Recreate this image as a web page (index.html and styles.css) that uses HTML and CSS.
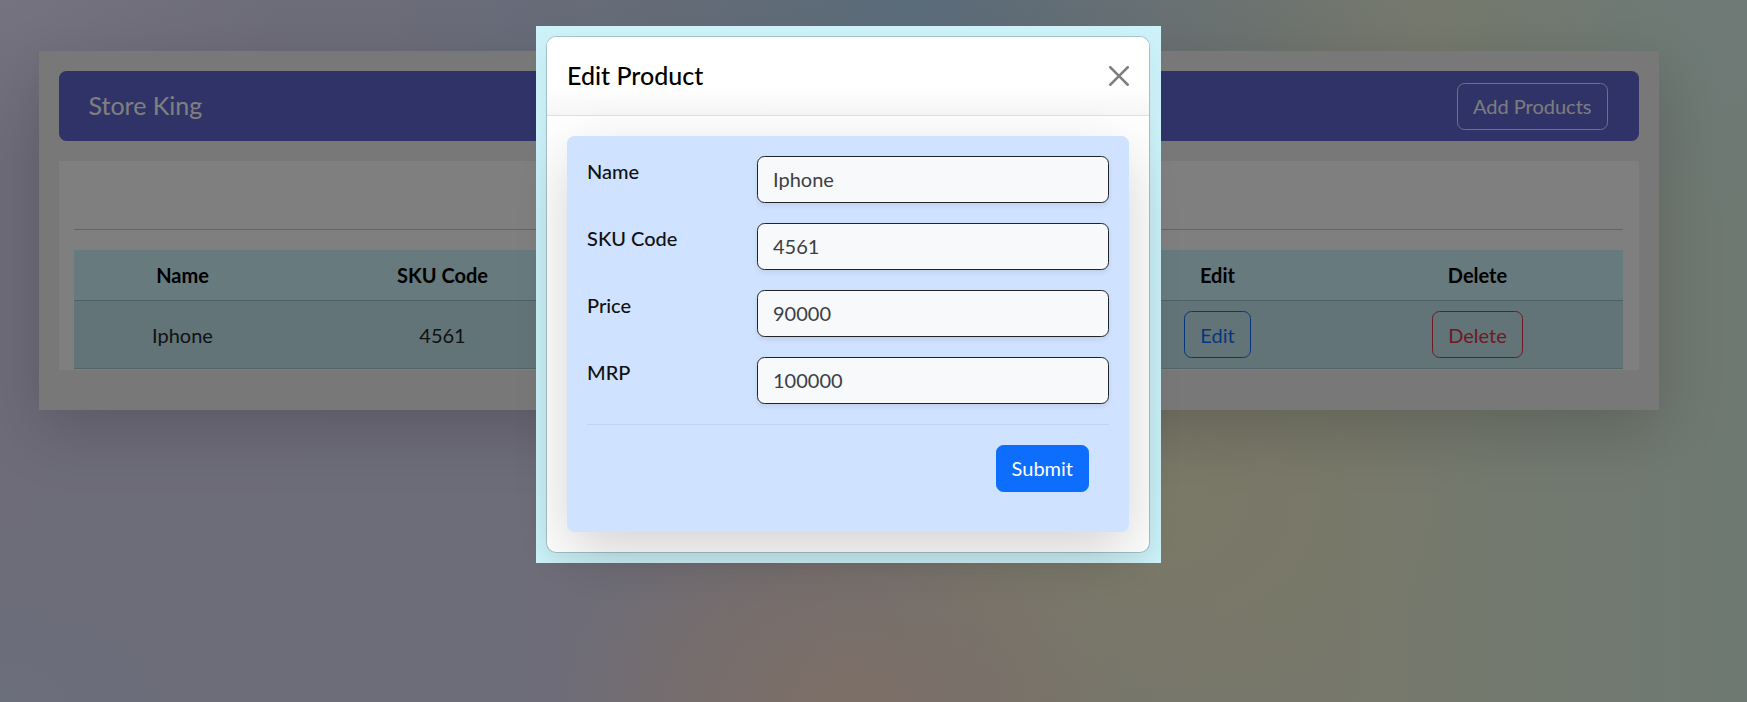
FILE: index.html
```html
<!DOCTYPE html>
<html lang="en">
<head>
<meta charset="utf-8">
<title>Store King</title>
<link rel="stylesheet" href="styles.css">
</head>
<body>
<div class="app-shell">
  <div class="store-container">
    <nav class="store-nav">
      <span class="brand">Store King</span>
      <button class="btn btn-outline-light" type="button">Add Products</button>
    </nav>
    <section class="product-card">
      <div class="card-spacer"></div>
      <hr class="divider">
      <table class="product-table">
        <colgroup>
          <col class="col-name">
          <col class="col-sku">
          <col class="col-price">
          <col class="col-mrp">
          <col class="col-edit">
          <col class="col-delete">
        </colgroup>
        <thead>
          <tr><th>Name</th><th>SKU Code</th><th>Price</th><th>MRP</th><th>Edit</th><th>Delete</th></tr>
        </thead>
        <tbody>
          <tr>
            <td>Iphone</td>
            <td>4561</td>
            <td>90000</td>
            <td>100000</td>
            <td><button class="btn btn-outline-primary" type="button">Edit</button></td>
            <td><button class="btn btn-outline-danger" type="button">Delete</button></td>
          </tr>
        </tbody>
      </table>
    </section>
  </div>
</div>

<div class="backdrop"></div>

<div class="modal-layer">
  <div class="modal-dialog">
    <div class="modal-content">
      <div class="modal-header">
        <h5 class="modal-title">Edit Product</h5>
        <button class="btn-close" type="button" aria-label="Close">
          <svg viewBox="0 0 16 16" width="20" height="20" aria-hidden="true"><path d="M.293.293a1 1 0 0 1 1.414 0L8 6.586 14.293.293a1 1 0 1 1 1.414 1.414L9.414 8l6.293 6.293a1 1 0 0 1-1.414 1.414L8 9.414l-6.293 6.293a1 1 0 0 1-1.414-1.414L6.586 8 .293 1.707a1 1 0 0 1 0-1.414z"/></svg>
        </button>
      </div>
      <div class="modal-body">
        <form class="edit-form">
          <div class="form-row">
            <label class="form-label" for="f-name">Name</label>
            <input class="form-input" id="f-name" type="text" value="Iphone">
          </div>
          <div class="form-row">
            <label class="form-label" for="f-sku">SKU Code</label>
            <input class="form-input" id="f-sku" type="text" value="4561">
          </div>
          <div class="form-row">
            <label class="form-label" for="f-price">Price</label>
            <input class="form-input" id="f-price" type="text" value="90000">
          </div>
          <div class="form-row">
            <label class="form-label" for="f-mrp">MRP</label>
            <input class="form-input" id="f-mrp" type="text" value="100000">
          </div>
          <hr class="form-divider">
          <div class="form-actions">
            <button class="btn btn-primary" type="button">Submit</button>
          </div>
        </form>
      </div>
    </div>
  </div>
</div>
</body>
</html>
```

FILE: styles.css
```css
* { box-sizing: border-box; }

html, body { height: 100%; }

body {
  margin: 0;
  font-family: "Segoe UI", Lato, "Noto Sans", sans-serif;
  font-size: 20px;
  line-height: 1.5;
  color: #212529;
  background:
    radial-gradient(ellipse 38% 42% at 52% 0%, rgba(180, 214, 244, 1), rgba(180, 214, 244, 0) 80%),
    radial-gradient(ellipse 20% 30% at 0% 0%, rgba(232, 230, 254, 1), rgba(232, 230, 254, 0) 80%),
    radial-gradient(ellipse 18% 40% at 100% 0%, rgba(220, 244, 238, 1), rgba(220, 244, 238, 0) 80%),
    radial-gradient(ellipse 20% 35% at 48% 100%, rgba(250, 222, 206, 1), rgba(250, 222, 206, 0) 80%),
    radial-gradient(ellipse 20% 40% at 67% 72%, rgba(246, 242, 206, 1), rgba(246, 242, 206, 0) 80%),
    radial-gradient(ellipse 20% 30% at 0% 100%, rgba(214, 220, 246, 1), rgba(214, 220, 246, 0) 80%),
    linear-gradient(90deg, #dcd8f2 0%, #dad8f2 30%, #e4dae2 44%, #eee8d6 58%, #eef2d8 78%, #dcf2e6 100%);
}

/* ---------- page ---------- */
.app-shell {
  width: 1697px;
  padding-top: 51px;
}

.store-container {
  width: 1620px;
  margin: 0 auto;
  padding: 20px 20px 40px;
  background: #f1f1f1;
  box-shadow: 0 20px 60px rgba(0, 0, 0, 0.175);
}

.store-nav {
  height: 70px;
  display: flex;
  align-items: center;
  justify-content: space-between;
  padding: 0 31px 0 30px;
  background: #5e66d0;
  border-radius: 7.5px;
}

.brand {
  font-size: 25px;
  line-height: 1.5;
  color: #fff;
}

.btn {
  display: inline-block;
  font-family: inherit;
  font-size: 20px;
  line-height: 1.5;
  padding: 7.5px 15px;
  border: 1px solid transparent;
  border-radius: 7.5px;
  background: transparent;
  cursor: pointer;
}

.btn-outline-light {
  color: #f8f9fa;
  border-color: rgba(248, 249, 250, 0.85);
}

.btn-outline-primary {
  color: #0d6efd;
  border-color: #0d6efd;
}

.btn-outline-danger {
  color: #dc3545;
  border-color: #dc3545;
}

.btn-primary {
  color: #fff;
  background: #0d6efd;
  border-color: #0d6efd;
  height: 47px;
}

.product-card {
  margin-top: 20px;
  background: #fff;
  padding: 20px 16px 1px 15px;
}

.card-spacer { height: 28px; }

.divider {
  margin: 20px 0;
  border: 0;
  border-top: 1px solid #212529;
  opacity: 0.25;
}

.product-table {
  width: 100%;
  table-layout: fixed;
  border-collapse: collapse;
  background: #cff4fc;
  color: #000;
}

.col-name { width: 218px; }
.col-sku { width: 302px; }
.col-price { width: 237px; }
.col-mrp { width: 272px; }
.col-edit { width: 230px; }
.col-delete { width: 290px; }

.product-table th,
.product-table td {
  padding: 10px;
  text-align: center;
  vertical-align: middle;
}

.product-table th { font-weight: 700; }

.product-table thead tr { border-bottom: 1px solid #9fbec5; }

.product-table tbody tr {
  background: #c5e8ef;
  border-bottom: 1px solid #a9cbd2;
}

.product-table td { color: #212529; }

/* ---------- modal ---------- */
.backdrop {
  position: fixed;
  inset: 0;
  background: rgba(0, 0, 0, 0.5);
}

.modal-layer {
  position: fixed;
  top: 0;
  left: 0;
  width: 1697px;
  padding-top: 26px;
  display: flex;
  justify-content: center;
}

.modal-dialog {
  width: 625px;
  padding: 10px 11px 10px 10px;
  background: #cdf2f9;
}

.modal-content {
  background: #fff;
  background-clip: padding-box;
  border: 1px solid rgba(0, 0, 0, 0.175);
  border-radius: 10px;
  box-shadow: 0 8px 24px rgba(0, 0, 0, 0.06);
}

.modal-header {
  display: flex;
  align-items: center;
  padding: 20px;
  border-bottom: 1px solid #dee2e6;
  background: linear-gradient(180deg, #fff 60%, #f7f7f7 100%);
  border-radius: 9px 9px 0 0;
}

.modal-title {
  margin: 0;
  font-size: 25px;
  font-weight: 500;
  line-height: 1.5;
  color: #000;
}

.btn-close {
  margin: -10px -10px -10px auto;
  padding: 10px;
  width: 40px;
  height: 40px;
  border: 0;
  background: transparent;
  opacity: 0.5;
  cursor: pointer;
}

.btn-close svg {
  display: block;
  fill: #000;
}

.modal-body { padding: 20px; }

.edit-form {
  margin: 0;
  padding: 20px;
  background: #cfe2ff;
  border-radius: 7.5px;
  box-shadow: 0 20px 60px rgba(0, 0, 0, 0.175);
}

.form-row {
  display: grid;
  grid-template-columns: 170px 1fr;
  margin-bottom: 20px;
}

.form-row:nth-of-type(4) { margin-bottom: 0; }

.form-label {
  font-weight: 500;
  color: #111;
  line-height: 1.5;
}

.form-input {
  height: 47px;
  padding: 7.5px 15px;
  font-family: inherit;
  font-size: 20px;
  line-height: 1.5;
  color: #3b4045;
  background: #f8f9fa;
  border: 1px solid #212529;
  border-radius: 7.5px;
  box-shadow: 0 2.5px 5px rgba(0, 0, 0, 0.075);
}

.form-divider {
  margin: 20px 0;
  border: 0;
  border-top: 1px solid #212529;
  opacity: 0.07;
}

.form-actions {
  text-align: right;
  padding: 0 20px 20px 0;
}
```
